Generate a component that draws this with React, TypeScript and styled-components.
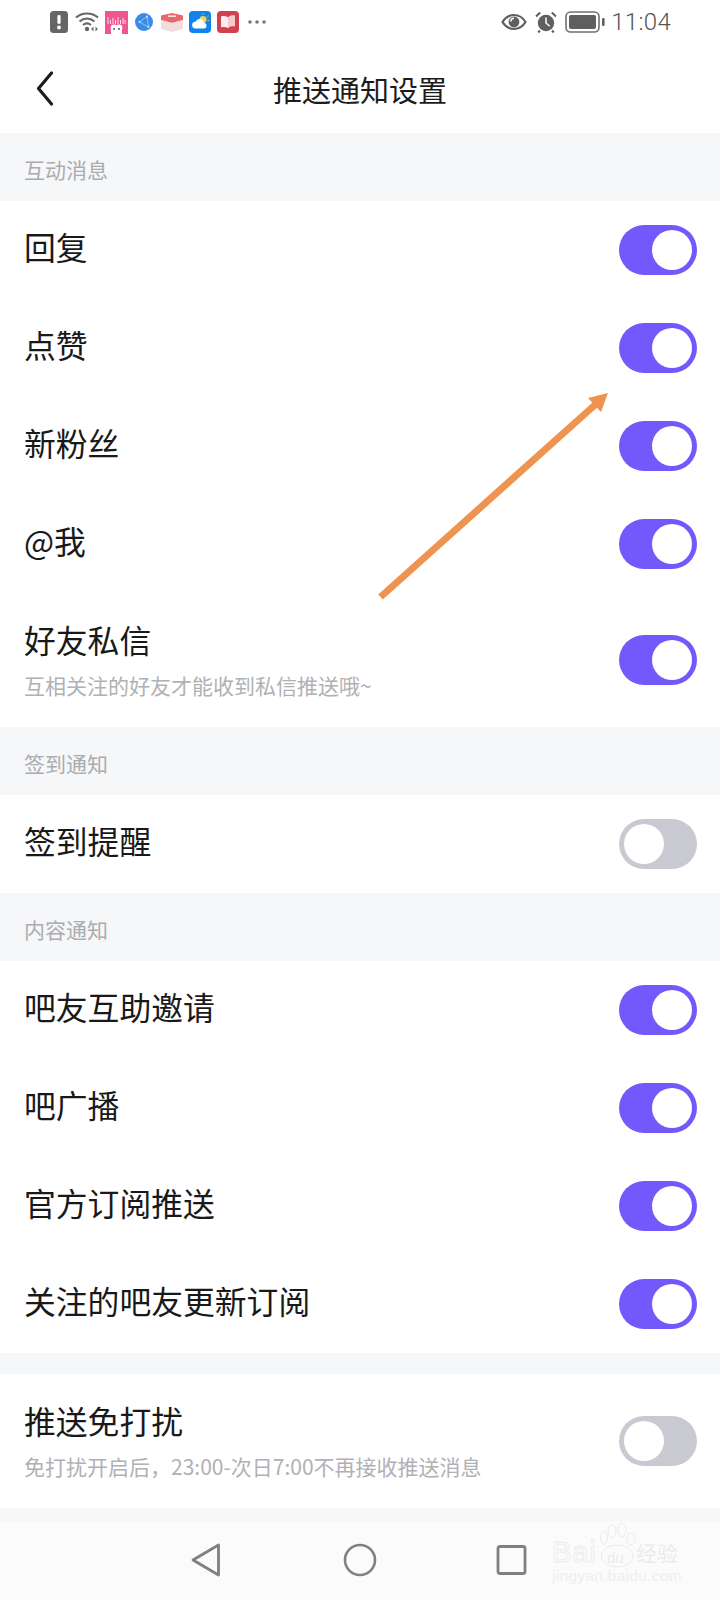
import React, { FC } from 'react';
import styled, { createGlobalStyle } from 'styled-components';

const FONT = `"Noto Sans CJK SC", "Noto Sans", sans-serif`;

const GlobalStyle = createGlobalStyle`
  html, body {
    margin: 0;
    padding: 0;
    background: #f6f7f9;
  }
  * {
    box-sizing: border-box;
  }
`;

const Page = styled.div`
  position: relative;
  width: 720px;
  height: 1600px;
  display: flex;
  flex-direction: column;
  overflow: hidden;
  background: #f6f7f9;
  font-family: ${FONT};
`;

const StatusBar = styled.div`
  height: 44px;
  padding: 0 49px 0 50px;
  display: flex;
  align-items: center;
  justify-content: space-between;
  background: #fff;
`;

const StatusGroup = styled.div`
  display: flex;
  align-items: center;
`;

const Glyph = styled.svg<{ $left?: number }>`
  display: block;
  flex-shrink: 0;
  margin-left: ${({ $left }) => $left ?? 0}px;
`;

const Clock = styled.span`
  margin-left: 6px;
  font-family: Roboto, "Noto Sans", sans-serif;
  font-size: 24px;
  font-weight: 300;
  line-height: 28px;
  letter-spacing: 0.3px;
  color: #555;
`;

const Header = styled.header`
  position: relative;
  height: 89px;
  display: flex;
  align-items: center;
  justify-content: center;
  background: #fff;
`;

const BackIcon = styled.svg`
  position: absolute;
  left: 35px;
  top: 26px;
`;

const HeaderTitle = styled.h1`
  margin: 0;
  font-size: 29px;
  font-weight: 400;
  line-height: 40px;
  color: #1c1c1c;
`;

const SectionLabel = styled.div`
  height: 68px;
  padding: 4px 24px 0;
  display: flex;
  align-items: center;
  font-size: 21px;
  line-height: 30px;
  color: #aaacb0;
`;

const Spacer = styled.div`
  height: 21px;
`;

const BottomGap = styled.div`
  height: 14px;
`;

const List = styled.section`
  background: #fff;
`;

const Row = styled.div<{ $tall: boolean }>`
  height: ${({ $tall }) => ($tall ? 134 : 98)}px;
  padding: 0 23px 0 24px;
  display: flex;
  align-items: center;
  justify-content: space-between;
`;

const RowText = styled.div<{ $tall: boolean }>`
  display: flex;
  flex-direction: column;
  padding-bottom: ${({ $tall }) => ($tall ? 3 : 8)}px;
`;

const RowTitle = styled.div`
  font-size: 31.8px;
  line-height: 52px;
  color: #191919;
`;

const RowHint = styled.div`
  font-size: 21px;
  line-height: 40px;
  color: #b0b1b4;
`;

const Toggle = styled.div<{ $on: boolean }>`
  width: 78px;
  height: 50px;
  padding: 5px;
  display: flex;
  justify-content: ${({ $on }) => ($on ? 'flex-end' : 'flex-start')};
  border-radius: 25px;
  background: ${({ $on }) => ($on ? '#7359fb' : '#c9c9d1')};
`;

const Knob = styled.div`
  width: 40px;
  height: 40px;
  border-radius: 50%;
  background: #fff;
`;

const NavBar = styled.nav`
  flex: 1;
  position: relative;
  display: flex;
  align-items: center;
  background: #fbfbfb;
`;

const NavIcon = styled.svg<{ $left: number }>`
  display: block;
  margin-left: ${({ $left }) => $left}px;
  margin-bottom: 2px;
`;

const Annotation = styled.svg`
  position: absolute;
  left: 370px;
  top: 385px;
`;

const Watermark = styled.div`
  position: absolute;
  left: 552px;
  top: 1524px;
  width: 132px;
  height: 64px;
`;

const WatermarkBrand = styled.span`
  position: absolute;
  left: 0;
  top: 12px;
  font-family: "Liberation Sans", sans-serif;
  font-size: 29px;
  line-height: 32px;
  letter-spacing: 1px;
  color: #fbfbfb;
  -webkit-text-stroke: 0.8px #ebebeb;
`;

const WatermarkDu = styled(WatermarkBrand)`
  left: 55px;
  top: 26px;
  font-size: 15px;
  line-height: 15px;
  letter-spacing: 0;
  color: #ececec;
  -webkit-text-stroke: 0;
`;

const WatermarkCn = styled(WatermarkBrand)`
  left: 84px;
  top: 14px;
  font-family: ${FONT};
  font-size: 21px;
  line-height: 28px;
  letter-spacing: 0;
  color: #ebebeb;
  -webkit-text-stroke: 0;
`;

const WatermarkUrl = styled.span`
  position: absolute;
  left: 0;
  top: 43px;
  font-family: "Liberation Sans", sans-serif;
  font-size: 15.5px;
  line-height: 18px;
  letter-spacing: 0.3px;
  color: #efefef;
`;

const PawIcon = styled.svg`
  position: absolute;
  left: 46px;
  top: -2px;
`;

type RowItem = { title: string; hint?: string; on: boolean };

const engagement: RowItem[] = [
  { title: '回复', on: true },
  { title: '点赞', on: true },
  { title: '新粉丝', on: true },
  { title: '@我', on: true },
  { title: '好友私信', hint: '互相关注的好友才能收到私信推送哦~', on: true },
];

const checkIn: RowItem[] = [{ title: '签到提醒', on: false }];

const content: RowItem[] = [
  { title: '吧友互助邀请', on: true },
  { title: '吧广播', on: true },
  { title: '官方订阅推送', on: true },
  { title: '关注的吧友更新订阅', on: true },
];

const quiet: RowItem[] = [
  { title: '推送免打扰', hint: '免打扰开启后，23:00-次日7:00不再接收推送消息', on: false },
];

const Rows: FC<{ items: RowItem[] }> = ({ items }) => (
  <List>
    {items.map((item) => (
      <Row key={item.title} $tall={Boolean(item.hint)}>
        <RowText $tall={Boolean(item.hint)}>
          <RowTitle>{item.title}</RowTitle>
          {item.hint && <RowHint>{item.hint}</RowHint>}
        </RowText>
        <Toggle $on={item.on}>
          <Knob />
        </Toggle>
      </Row>
    ))}
  </List>
);

const LeftStatusIcons: FC = () => (
  <StatusGroup>
    <Glyph width="18" height="22" viewBox="0 0 18 22">
      <rect width="18" height="22" rx="3.5" fill="#666" />
      <rect x="7.4" y="4" width="3.2" height="9" rx="1.4" fill="#fff" />
      <circle cx="9" cy="16.5" r="1.9" fill="#fff" />
    </Glyph>
    <Glyph $left={7} width="25" height="22" viewBox="0 0 25 22" fill="none">
      <path d="M1 6.5C7 1 17 1 23 6.5" stroke="#666" strokeWidth="2" />
      <path d="M4.5 10.5C9 6.5 15 6.5 19.5 10.5" stroke="#666" strokeWidth="2" />
      <path d="M8 14C10.5 12 13.5 12 16 14" stroke="#666" strokeWidth="2" />
      <circle cx="12" cy="18" r="2.2" fill="#666" />
      <path d="M18.5 15.5v5l-2.4-2.5zM20.5 15.5v5l2.4-2.5z" fill="#666" />
    </Glyph>
    <Glyph $left={5} width="23" height="23" viewBox="0 0 23 23">
      <rect width="23" height="23" fill="#f0558f" />
      <path d="M3 6v7M5.5 9v4M8 7v6M10.5 9v4M13 6v7M15.5 9v4M18 7v6M20 9v4" stroke="#fde0ea" strokeWidth="1" />
      <circle cx="9" cy="17" r="3.4" fill="#fff" />
      <circle cx="14" cy="17" r="3.4" fill="#fff" />
      <rect x="6" y="18" width="11" height="5" fill="#fff" />
      <circle cx="9" cy="18" r="1" fill="#555" />
      <circle cx="14" cy="18" r="1" fill="#555" />
    </Glyph>
    <Glyph $left={7} width="18" height="18" viewBox="0 0 18 18" fill="none">
      <circle cx="9" cy="9" r="9" fill="#3a8be8" />
      <path d="M4.5 9L12 3.5 13.5 14z" stroke="#a9cff5" strokeWidth="0.8" />
      <circle cx="4.5" cy="9" r="1" fill="#d6e8fb" />
      <circle cx="12" cy="3.5" r="1" fill="#d6e8fb" />
      <circle cx="13.5" cy="14" r="1" fill="#d6e8fb" />
    </Glyph>
    <Glyph $left={8} width="22" height="20" viewBox="0 0 22 20">
      <path d="M0 3.5L11 1l11 2.5V8L11 11 0 8z" fill="#e8686c" />
      <path d="M0 8l11 3 11-3v9l-11 3-11-3z" fill="#f1dcdc" />
      <rect x="7" y="3.5" width="8" height="1.3" fill="#fff" />
    </Glyph>
    <Glyph $left={6} width="22" height="22" viewBox="0 0 22 22">
      <rect width="22" height="22" rx="4" fill="#0f84ec" />
      <circle cx="14" cy="8.5" r="3.6" fill="#f7cf56" />
      <path d="M14 2.5v1.4M19.5 5l-1.2 1M20 9.6h-1.4" stroke="#f7cf56" strokeWidth="1" />
      <path d="M6.5 17.5a3.4 3.4 0 0 1 0-6.8 4.6 4.6 0 0 1 8.7 1 3 3 0 0 1 .3 5.8z" fill="#fff" />
    </Glyph>
    <Glyph $left={6} width="22" height="22" viewBox="0 0 22 22">
      <rect width="22" height="22" rx="4" fill="#d2414e" />
      <path d="M4 5.5c2.5-.8 5-.6 7 .8v11c-2-1.4-4.5-1.6-7-.8z" fill="#fbeced" />
      <path d="M18 4.5c-2.5-.6-5-.2-7 1.800v11c2-2 4.5-2.4 7-1.800z" fill="#f6c9cc" />
    </Glyph>
    <Glyph $left={9} width="18" height="4" viewBox="0 0 18 4">
      <circle cx="2" cy="2" r="1.8" fill="#777" />
      <circle cx="9" cy="2" r="1.8" fill="#777" />
      <circle cx="16" cy="2" r="1.8" fill="#777" />
    </Glyph>
  </StatusGroup>
);

const RightStatusIcons: FC = () => (
  <StatusGroup>
    <Glyph width="26" height="18" viewBox="0 0 26 18" fill="none">
      <path d="M1.5 9C4.5 4 8.5 2 13 2s8.5 2 11.5 7c-3 5-7 7-11.5 7S4.5 14 1.5 9z" stroke="#5f5f5f" strokeWidth="2.2" />
      <circle cx="13" cy="9" r="5.4" fill="#5f5f5f" />
      <path d="M9.8 8.5A3.3 3.3 0 0 1 13 5.3" stroke="#fff" strokeWidth="1.4" />
    </Glyph>
    <Glyph $left={8} width="22" height="22" viewBox="0 0 22 22" fill="none">
      <circle cx="11" cy="12" r="8.2" fill="#5f5f5f" />
      <path d="M11 6.5V12l3.8 3.2" stroke="#fff" strokeWidth="1.5" />
      <path d="M1 5.5L5.2 1.5M21 5.5L16.8 1.5M5 19.5l-1.800 2M17 19.5l1.800 2" stroke="#5f5f5f" strokeWidth="2" />
    </Glyph>
    <Glyph $left={8} width="40" height="22" viewBox="0 0 40 22" fill="none">
      <rect x="1" y="1" width="33" height="20" rx="4.5" stroke="#707070" strokeWidth="1.6" />
      <rect x="4" y="4" width="27" height="14" rx="2" fill="#5f5f5f" />
      <rect x="37" y="7" width="2.6" height="8" rx="1.2" fill="#5f5f5f" />
    </Glyph>
    <Clock>11:04</Clock>
  </StatusGroup>
);

const App: FC = () => (
  <Page>
    <GlobalStyle />
    <StatusBar>
      <LeftStatusIcons />
      <RightStatusIcons />
    </StatusBar>
    <Header>
      <BackIcon width="20" height="36" viewBox="0 0 20 36" fill="none">
        <path d="M16.5 3L3.5 18.5l13 15.5" stroke="#1c1c1c" strokeWidth="3.2" strokeLinecap="round" strokeLinejoin="round" />
      </BackIcon>
      <HeaderTitle>推送通知设置</HeaderTitle>
    </Header>

    <SectionLabel>互动消息</SectionLabel>
    <Rows items={engagement} />
    <SectionLabel>签到通知</SectionLabel>
    <Rows items={checkIn} />
    <SectionLabel>内容通知</SectionLabel>
    <Rows items={content} />
    <Spacer />
    <Rows items={quiet} />
    <BottomGap />

    <NavBar>
      <NavIcon $left={190} width="32" height="36" viewBox="0 0 32 36" fill="none">
        <path d="M28.5 3v30L3 18z" stroke="#808080" strokeWidth="2.8" strokeLinejoin="round" />
      </NavIcon>
      <NavIcon $left={120} width="36" height="36" viewBox="0 0 36 36" fill="none">
        <circle cx="18" cy="18" r="15" stroke="#808080" strokeWidth="2.6" />
      </NavIcon>
      <NavIcon $left={117} width="34" height="36" viewBox="0 0 34 36" fill="none">
        <rect x="3" y="4.5" width="27" height="27" rx="2" stroke="#808080" strokeWidth="2.8" />
      </NavIcon>
    </NavBar>

    <Watermark>
      <PawIcon width="40" height="48" viewBox="0 0 40 48" fill="none" stroke="#ebebeb" strokeWidth="1">
        <ellipse cx="6" cy="16" rx="3.5" ry="6" />
        <ellipse cx="14" cy="9" rx="4" ry="6.5" />
        <ellipse cx="24" cy="8" rx="4" ry="6.5" />
        <ellipse cx="33" cy="17" rx="4" ry="6" />
        <ellipse cx="19" cy="34" rx="16" ry="11" />
      </PawIcon>
      <WatermarkBrand>Bai</WatermarkBrand>
      <WatermarkDu>du</WatermarkDu>
      <WatermarkCn>经验</WatermarkCn>
      <WatermarkUrl>jingyan.baidu.com</WatermarkUrl>
    </Watermark>

    <Annotation width="250" height="220" viewBox="0 0 250 220">
      <path d="M10.5 212L226 19" stroke="#ef9350" strokeWidth="7" />
      <path d="M238 8L218 13L231 27z" fill="#ef9350" />
    </Annotation>
  </Page>
);

export default App;
